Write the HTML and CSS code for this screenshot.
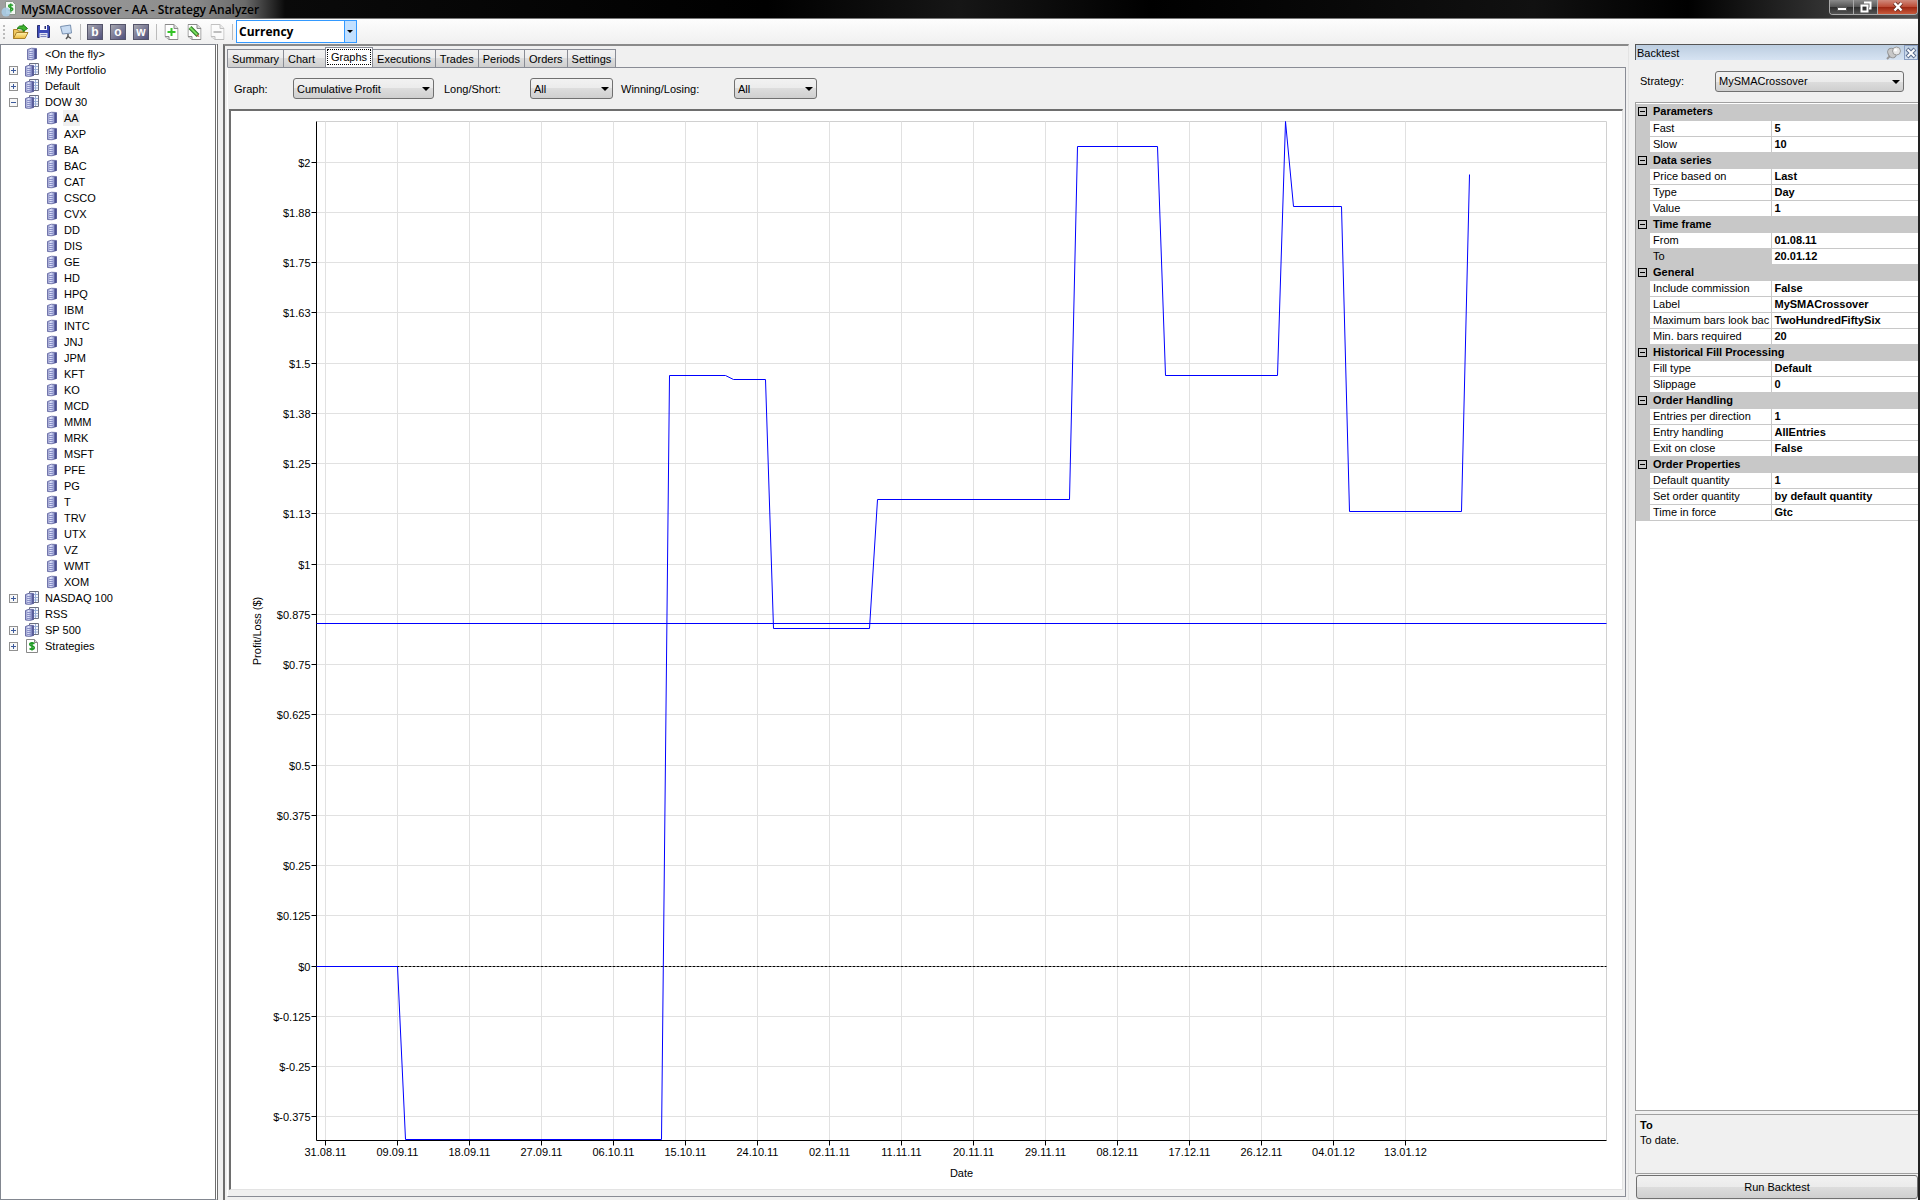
FILE: index.html
```html
<!DOCTYPE html>
<html lang="en">
<head>
  <meta charset="UTF-8">
  <meta name="viewport" content="width=device-width, initial-scale=1.0">
  <title>MySMACrossover - AA - Strategy Analyzer</title>
  <link rel="stylesheet" href="styles.css">
</head>
<body>

  <!-- shared icons -->
  <svg class="defs" width="0" height="0" aria-hidden="true">
    <defs>
      <linearGradient id="cyl" x1="0" x2="1" y1="0" y2="0">
        <stop offset="0" stop-color="#8d92c4"/>
        <stop offset="0.35" stop-color="#dfe3fa"/>
        <stop offset="0.65" stop-color="#9da4d6"/>
        <stop offset="1" stop-color="#4a4e8c"/>
      </linearGradient>
      <linearGradient id="gold" x1="0" x2="0" y1="0" y2="1">
        <stop offset="0" stop-color="#fff3b0"/>
        <stop offset="1" stop-color="#ecb93c"/>
      </linearGradient>
      <symbol id="instrument" viewBox="0 0 14 14">
        <path d="M2.500 2.500 Q6 0.500 11.500 1.500 V11.500 Q7 13.500 2.500 12.500 Z" fill="url(#cyl)" stroke="#7276ac"/>
        <path d="M4 4.500h4M4 6.500h4M4 8.500h4M4 10.500h4" stroke="#8a90c8" fill="none"/>
        <path d="M10.500 2v10" stroke="#4a4f90" stroke-width="2"/>
      </symbol>
      <symbol id="list" viewBox="0 0 14 14">
        <path d="M4.500.5h9v11h-9z" fill="#f4f6fd" stroke="#6c7080"/>
        <path d="M5 3.500h8M5 6.500h8M5 9h8M10.500 1v10" stroke="#9ab0d8"/>
        <path d="M.5 3.500 Q4 1.500 8.500 2.500 V12.500 Q5 14 .5 13 Z" fill="url(#cyl)" stroke="#6a6ea6"/>
        <path d="M2 5.500h4M2 7.500h4M2 9.500h4M2 11.500h4" stroke="#8a90c8"/>
        <path d="M8 3v10" stroke="#4a4f90"/>
      </symbol>
      <symbol id="page" viewBox="0 0 14 16">
        <path d="M.5.5h9l4 4v11h-9l-4-3z" fill="#fff" stroke="#8a8a8a"/>
        <path d="M9.500.5v4h4M.5 12.500h4v3" fill="#ddd" stroke="#8a8a8a"/>
      </symbol>
      <symbol id="pageDollar" viewBox="0 0 14 14">
        <path d="M1.500.5h8l3 3v10h-11z" fill="#fff" stroke="#888"/>
        <path d="M9.500.5v3h3" fill="#ddd" stroke="#888"/>
        <path d="M9.500 4.700Q7 3.200 5 4.500Q4 6.300 7 7Q10 7.700 9 9.500Q7 11 4.500 9.500M7 3v8.500" fill="none" stroke="#1f9a25" stroke-width="1.600"/>
      </symbol>
    </defs>
  </svg>

  <header class="titlebar">
    <svg class="app-icon" width="16" height="16" viewBox="0 0 16 16">
      <path d="M4.500.5h7l3 3v10h-10z" fill="#f4f8f4" stroke="#8a968a"/>
      <path d="M12 4.500Q10 3 8 4.200Q7 6 9.500 6.500Q12.500 7.200 11.500 9Q9.500 10.500 7.500 9M9.700 2.500v9" fill="none" stroke="#2aa02e" stroke-width="1.500"/>
      <circle cx="5" cy="11" r="4.500" fill="#a8cbe4" opacity=".9"/>
    </svg>
    <h1>MySMACrossover - AA - Strategy Analyzer</h1>
    <div class="window-buttons">
      <button type="button" aria-label="Minimize">
        <svg width="12" height="12" viewBox="0 0 12 12"><path d="M1.500 6.500h9v3h-9z" fill="#fff" stroke="#555"/></svg>
      </button>
      <button type="button" aria-label="Restore">
        <svg width="12" height="12" viewBox="0 0 12 12"><path d="M4 1.500h6.500v6H9M1.500 4.500h6v6h-6z" fill="none" stroke="#fff" stroke-width="2"/></svg>
      </button>
      <button type="button" class="close" aria-label="Close">
        <svg width="12" height="12" viewBox="0 0 12 12"><path d="M2.500 2l7 7.500M9.500 2l-7 7.500" stroke="#5e2a22" stroke-width="4"/><path d="M2.500 2l7 7.500M9.500 2l-7 7.500" stroke="#fff" stroke-width="2.500"/></svg>
      </button>
    </div>
  </header>

  <div class="toolbar">
    <span class="grip"></span>
    <button type="button" class="wide" aria-label="Open">
      <svg width="17" height="16" viewBox="0 0 17 16">
        <path d="M1.500 14.500v-9h4l1 1.500h6v7.500z" fill="#f0c860" stroke="#a8812a"/>
        <path d="M1.500 14.500l3-6h11.500l-3 6z" fill="url(#gold)" stroke="#a8812a"/>
        <path d="M5 4.500Q7 1 11 2V.5l4.500 4-4.500 3V5.500Q8 4.500 5 4.500z" fill="#3fb52f" stroke="#1e7c18"/>
      </svg>
    </button>
    <button type="button" class="wide" aria-label="Save">
      <svg width="15" height="15" viewBox="0 0 15 15">
        <path d="M1.500 1.500h11l1 1v11h-12z" fill="#3c4ab8" stroke="#2a3070"/>
        <path d="M4 1h7v5H4z" fill="#fff"/>
        <path d="M8.500 2h1.500v3H8.500z" fill="#2a3070"/>
        <path d="M3.500 9h8v5h-8z" fill="#e4e7f4"/>
        <path d="M4.500 10.500h6M4.500 12.500h6" stroke="#8088c0"/>
      </svg>
    </button>
    <button type="button" class="wide" aria-label="Workspace">
      <svg width="14" height="16" viewBox="0 0 14 16">
        <path d="M1.500 2.500l10-1.500 1 8-9 1z" fill="#c9dcf2" stroke="#7890b0"/>
        <path d="M9 10v2.500L7 15M9 12.500l3 2" fill="none" stroke="#555" stroke-width="1.500"/>
      </svg>
    </button>
    <span class="sep"></span>
    <button type="button" class="letter">b</button>
    <button type="button" class="letter">o</button>
    <button type="button" class="letter">w</button>
    <span class="sep"></span>
    <button type="button" aria-label="Add">
      <svg width="15" height="16" viewBox="0 0 14 16"><use href="#page"/><path d="M7 4v8M3 8h8" stroke="#35c428" stroke-width="2"/></svg>
    </button>
    <button type="button" aria-label="Edit">
      <svg width="15" height="16" viewBox="0 0 14 16"><use href="#page"/><path d="M2.500 3.500l8 8" stroke="#2c7a24" stroke-width="4"/><path d="M2.500 3.500l7.500 7.500" stroke="#7ade5e" stroke-width="2"/><path d="M10 10l2 3-3-1z" fill="#b04a3a"/></svg>
    </button>
    <button type="button" aria-label="Remove" class="dim">
      <svg width="15" height="16" viewBox="0 0 14 16"><use href="#page"/><path d="M3 8h8" stroke="#888" stroke-width="2"/></svg>
    </button>
    <span class="sep"></span>
    <div class="currency">
      <select aria-label="Display unit"><option>Currency</option></select>
    </div>
  </div>

  <main class="workspace">
    <nav class="tree-panel" aria-label="Instruments">
      <ul class="tree" id="tree"></ul>
    </nav>

    <section class="results">
      <div class="tabs" role="tablist">
        <button type="button" role="tab">Summary</button>
        <button type="button" role="tab" class="roomy">Chart</button>
        <button type="button" role="tab" class="active" aria-selected="true">Graphs</button>
        <button type="button" role="tab">Executions</button>
        <button type="button" role="tab">Trades</button>
        <button type="button" role="tab">Periods</button>
        <button type="button" role="tab">Orders</button>
        <button type="button" role="tab">Settings</button>
      </div>
      <div class="tab-page">
        <form class="filters">
          <label class="graph-label" for="graph">Graph:</label>
          <div class="combo graph"><select id="graph"><option>Cumulative Profit</option></select></div>
          <label class="side-label" for="side">Long/Short:</label>
          <div class="combo short"><select id="side"><option>All</option></select></div>
          <label class="outcome-label" for="outcome">Winning/Losing:</label>
          <div class="combo short"><select id="outcome"><option>All</option></select></div>
        </form>
        <div class="chart-frame" id="chartFrame">
          <svg class="chart" id="chart" role="img" aria-label="Cumulative profit"></svg>
        </div>
      </div>
    </section>

    <aside class="backtest">
      <div class="panel-title">
        <h2>Backtest</h2>
        <button type="button" class="pin" aria-label="Auto hide">
          <svg width="16" height="14" viewBox="0 0 16 14">
            <path d="M5 9l-4 4" stroke="#999" stroke-width="2"/>
            <ellipse cx="6" cy="7" rx="4" ry="5" fill="#c8c8c8" stroke="#8c8c8c" transform="rotate(-30 6 7)"/>
            <circle cx="10.500" cy="5" r="4" fill="#e8e8e8" stroke="#999"/>
            <circle cx="9.500" cy="4" r="1.500" fill="#fff"/>
          </svg>
        </button>
        <button type="button" class="shut" aria-label="Close panel">
          <svg width="12" height="12" viewBox="0 0 12 12"><path d="M2 2l8 8M10 2l-8 8" stroke="#56698c" stroke-width="4"/><path d="M2.500 2.500l7 7M9.500 2.500l-7 7" stroke="#fff" stroke-width="2"/></svg>
        </button>
      </div>
      <div class="strategy">
        <label for="strategy">Strategy:</label>
        <div class="combo"><select id="strategy"><option>MySMACrossover</option></select></div>
      </div>
      <div class="props-box">
        <table class="props" id="props"></table>
      </div>
      <div class="help">
        <strong>To</strong>
        <p>To date.</p>
      </div>
      <button type="button" class="run">Run Backtest</button>
    </aside>
  </main>

  <script>
    const dow = ['AA', 'AXP', 'BA', 'BAC', 'CAT', 'CSCO', 'CVX', 'DD', 'DIS', 'GE', 'HD', 'HPQ', 'IBM', 'INTC', 'JNJ',
      'JPM', 'KFT', 'KO', 'MCD', 'MMM', 'MRK', 'MSFT', 'PFE', 'PG', 'T', 'TRV', 'UTX', 'VZ', 'WMT', 'XOM'];

    const nodes = [
      { name: '&lt;On the fly&gt;', icon: 'instrument', box: '' },
      { name: '!My Portfolio', icon: 'list', box: '+' },
      { name: 'Default', icon: 'list', box: '+' },
      { name: 'DOW 30', icon: 'list', box: '-', children: dow },
      { name: 'NASDAQ 100', icon: 'list', box: '+' },
      { name: 'RSS', icon: 'list', box: '' },
      { name: 'SP 500', icon: 'list', box: '+' },
      { name: 'Strategies', icon: 'pageDollar', box: '+' },
    ];

    const sections = [
      ['Parameters', [['Fast', '5'], ['Slow', '10']]],
      ['Data series', [['Price based on', 'Last'], ['Type', 'Day'], ['Value', '1']]],
      ['Time frame', [['From', '01.08.11'], ['To', '20.01.12']]],
      ['General', [['Include commission', 'False'], ['Label', 'MySMACrossover'],
        ['Maximum bars look bac', 'TwoHundredFiftySix'], ['Min. bars required', '20']]],
      ['Historical Fill Processing', [['Fill type', 'Default'], ['Slippage', '0']]],
      ['Order Handling', [['Entries per direction', '1'], ['Entry handling', 'AllEntries'], ['Exit on close', 'False']]],
      ['Order Properties', [['Default quantity', '1'], ['Set order quantity', 'by default quantity'], ['Time in force', 'Gtc']]],
    ];

    function icon(name) {
      return `<svg width="14" height="14"><use href="#${name}"/></svg>`;
    }

    // Plus or minus box in front of a node
    function expander(sign) {
      if (!sign) return '<span class="blank"></span>';
      const bar = sign === '+' ? 'M2 4.500h5M4.500 2v5' : 'M2 4.500h5';
      return `<button type="button" class="expander" aria-label="Toggle"><svg width="9" height="9"><path d="${bar}" stroke="currentColor"/></svg></button>`;
    }

    function renderTree() {
      document.getElementById('tree').innerHTML = nodes.map(node => `
        <li><div class="node">${expander(node.box)}${icon(node.icon)}<span>${node.name}</span></div>
        ${node.children ? '<ul>' + node.children.map((c, i) =>
          `<li><div class="node">${icon('instrument')}<span class="${i === 0 ? 'selected' : ''}">${c}</span></div></li>`).join('') + '</ul>' : ''}
        </li>`).join('');
    }

    function renderProps() {
      document.getElementById('props').innerHTML = '<colgroup><col class="gutter"><col class="name"><col></colgroup>' +
        sections.map(([title, rows]) => `
        <tbody>
          <tr class="head"><td>${expander('-')}</td><th colspan="2">${title}</th></tr>
          ${rows.map(([name, value]) => `<tr class="${name === 'To' ? 'current' : ''}"><td></td><th>${name}</th><td>${value}</td></tr>`).join('')}
        </tbody>`).join('');
    }

    // Draws axes, grid and the cumulative profit line to fill the frame
    function renderChart() {
      const frame = document.getElementById('chartFrame');
      const chart = document.getElementById('chart');
      const width = frame.clientWidth, height = frame.clientHeight;
      const left = 85.5, right = width - 15.5, top = 10.5, bottom = height - 48.5;
      const maxProfit = 2.101, range = 2.535, days = 161.25;
      const perDollar = (bottom - top) / range;
      const labels = ['$2', '$1.88', '$1.75', '$1.63', '$1.5', '$1.38', '$1.25', '$1.13', '$1', '$0.875', '$0.75', '$0.625',
        '$0.5', '$0.375', '$0.25', '$0.125', '$0', '$-0.125', '$-0.25', '$-0.375'];
      const dates = ['31.08.11', '09.09.11', '18.09.11', '27.09.11', '06.10.11', '15.10.11', '24.10.11', '02.11.11',
        '11.11.11', '20.11.11', '29.11.11', '08.12.11', '17.12.11', '26.12.11', '04.01.12', '13.01.12'];
      // [days since 31.08.11, profit]
      const profit = [[-1, 0], [9, 0], [10, -0.432], [42, -0.432], [43, 1.47], [50, 1.47], [51, 1.46], [55, 1.46],
        [56, 0.84], [68, 0.84], [69, 1.16], [93, 1.16], [94, 2.04], [104, 2.04], [105, 1.47], [119, 1.47], [120, 2.1],
        [121, 1.89], [127, 1.89], [128, 1.13], [142, 1.13], [143, 1.97]];
      const average = 0.853;
      const x = day => Math.floor(left + (day + 1.125) * (right - left) / days) + 0.5;
      const y = value => Math.floor(top + (maxProfit - value) * perDollar) + 0.5;

      let svg = `<path class="edge" d="M${left} ${top}H${right}V${bottom}"/>`;
      labels.forEach((text, i) => {
        const ly = y(2 - i * 0.125);
        if (text !== '$0') svg += `<path class="grid" d="M${left} ${ly}H${right}"/>`;
        svg += `<path class="axis" d="M${left - 5} ${ly}H${left}"/><text class="value" x="${left - 6}" y="${ly + 4}">${text}</text>`;
      });
      dates.forEach((text, i) => {
        const lx = x(i * 9);
        svg += `<path class="grid" d="M${lx} ${top}V${bottom}"/><path class="axis" d="M${lx} ${bottom}v5"/>
          <text class="date" x="${lx}" y="${bottom + 15}">${text}</text>`;
      });
      svg += `<path class="zero" d="M${left} ${y(0)}H${right}"/>
        <path class="axis" d="M${left} ${top}V${bottom}H${right}"/>
        <path class="line" d="M${left} ${y(average)}H${right}"/>
        <polyline class="line" points="${profit.map(([d, v], i) => (i ? x(d) : left) + ',' + y(v)).join(' ')}"/>
        <text class="date" x="${(left + right) / 2}" y="${bottom + 36}">Date</text>
        <text class="date" transform="translate(30 ${(top + bottom) / 2}) rotate(-90)">Profit/Loss ($)</text>`;
      chart.setAttribute('viewBox', `0 0 ${width} ${height}`);
      chart.innerHTML = svg;
    }

    renderTree();
    renderProps();
    renderChart();
    window.addEventListener('resize', renderChart);
  </script>
</body>
</html>
```
FILE: styles.css
```css
* {
  box-sizing: border-box;
}

body {
  font-family: "Liberation Sans", Arial, sans-serif;
  font-size: 11px;
  line-height: 16px;
  color: #000;
  margin: 0;
  height: 100vh;
  display: flex;
  flex-direction: column;
  background-color: #f0f0f0;
  border-right: 2px solid #222;
  overflow: hidden;
}

h1, h2, p, ul {
  margin: 0;
  padding: 0;
  font-size: inherit;
  font-weight: normal;
}

ul {
  list-style-type: none;
}

button, select {
  font: inherit;
  color: inherit;
  padding: 0;
  margin: 0;
}

svg {
  display: block;
  flex: none;
}

.defs {
  position: absolute;
}

/* title bar */
.titlebar {
  display: flex;
  align-items: center;
  height: 19px;
  flex: none;
  background: linear-gradient(90deg, #a0a0a0 0, #8c8c8c 190px, #6a6a6a 245px, #0a0a0a 285px, #000 40%, #161616 50%, #000 60%, #111 80%, #000 88%, #2a2a2a 94%, #555 100%);
  border-bottom: 1px solid #777;
}

.app-icon {
  margin: 0 4px 0 1px;
}

.titlebar h1 {
  padding-top: 2px;
  font-family: "Open Sans", sans-serif;
  font-size: 12px;
  font-weight: 600;
  flex: 1;
}

.window-buttons {
  display: flex;
  align-self: flex-start;
  height: 15px;
  border: 1px solid #aaa;
  border-top: none;
  border-radius: 0 0 4px 4px;
  overflow: hidden;
}

.window-buttons button {
  display: flex;
  align-items: center;
  justify-content: center;
  width: 24px;
  border: none;
  border-right: 1px solid #aaa;
  background: linear-gradient(#8a8a8a, #555 50%, #2c2c2c 50%, #555);
}

.window-buttons .close {
  width: 39px;
  border-right: none;
  background: linear-gradient(#d08a7c, #bc4a34 50%, #9c2410 50%, #c85a3c);
}

/* toolbar */
.toolbar {
  display: flex;
  align-items: center;
  height: 25px;
  flex: none;
  background: linear-gradient(#fdfdfd, #f0f0f0);
}

.toolbar button {
  display: flex;
  align-items: center;
  justify-content: center;
  width: 16px;
  height: 16px;
  margin-right: 7px;
  border: none;
  background: none;
}

.toolbar .wide {
  width: 18px;
  margin-right: 5px;
}

.toolbar .letter {
  border: 1px solid #55556a;
  background: linear-gradient(135deg, #a8a8b0, #50507c);
  color: #fff;
  font-weight: bold;
  font-size: 12px;
  line-height: 12px;
}

.toolbar .dim {
  opacity: 0.5;
}

.grip {
  width: 2px;
  height: 14px;
  margin: 0 6px 0 3px;
  background: repeating-linear-gradient(#bbb 0 2px, transparent 2px 4px);
}

.sep {
  width: 1px;
  height: 16px;
  margin-right: 6px;
  background-color: #bbb;
}

.toolbar .sep + div {
  margin-left: -3px;
}

.currency {
  position: relative;
  width: 121px;
  height: 23px;
}

.currency select {
  appearance: none;
  width: 100%;
  height: 100%;
  padding-left: 2px;
  border: 1px solid #3399ff;
  border-radius: 0;
  background: linear-gradient(90deg, #fff 107px, #3399ff 107px, #3399ff 108px, #c2e0ff 108px);
  font-family: "Open Sans", sans-serif;
  font-size: 12px;
  font-weight: bold;
}

.currency::after,
.combo::after {
  content: "";
  position: absolute;
  top: 9px;
  right: 4px;
  border: 4px solid transparent;
  border-top-color: #000;
  border-bottom: none;
  pointer-events: none;
}

.currency::after {
  top: 10px;
  border-width: 3px;
  border-bottom: none;
}

/* main area */
.workspace {
  display: flex;
  flex: 1;
  min-height: 0;
}

.tree-panel {
  width: 218px;
  flex: none;
  background-color: #fff;
  border: 1px solid #828790;
  border-right: 3px double #6e6e6e;
  padding-top: 1px;
  overflow: hidden;
}

.node {
  display: flex;
  align-items: center;
  height: 16px;
  padding-left: 8px;
}

.node svg {
  margin-right: 5px;
}

.node span {
  padding: 0 1px;
}

.tree ul .node {
  padding-left: 44px;
}

.tree ul .node svg {
  margin-right: 4px;
}

.selected {
  background-color: #f0f0f0;
}

.expander,
.blank {
  width: 9px;
  height: 9px;
  margin-right: 7px;
  flex: none;
}

.expander {
  display: block;
  border: 1px solid #919191;
  background-color: #f8f8f8;
  color: #3c5a9c;
}

.node .expander svg,
.props .expander svg {
  margin: -1px;
}

/* results */
.results {
  display: flex;
  flex-direction: column;
  flex: 1;
  min-width: 0;
  margin-left: 5px;
  margin-right: 6px;
  padding: 3px 0 0 2px;
  border-left: 2px solid #6e6e6e;
  border-top: 2px solid #8a8a8a;
  border-right: 1px solid #e3e3e3;
}

.tabs {
  display: flex;
  align-items: flex-end;
  height: 18px;
}

.tabs button {
  height: 18px;
  padding: 0 4px;
  margin-left: -1px;
  border: 1px solid #898c95;
  border-bottom: none;
  border-radius: 0;
  background: linear-gradient(#f2f2f2, #ebebeb 50%, #dddddd 50%, #cfcfcf);
}

.tabs button:first-child {
  margin-left: 0;
}

.tabs .roomy {
  padding-right: 10px;
}

.tabs .active {
  position: relative;
  height: 20px;
  padding: 0 5px 2px;
  background: #fff;
  outline: 1px dotted #000;
  outline-offset: -3px;
}

.tab-page {
  display: flex;
  flex-direction: column;
  flex: 1;
  min-height: 0;
  margin: 0 2px 3px 0;
  padding: 0 2px 6px 1px;
  border: 1px solid #898c95;
  border-left-color: #fff;
}

.filters {
  display: flex;
  align-items: center;
  height: 41px;
  flex: none;
  padding-left: 5px;
}

.graph-label {
  width: 59px;
}

.side-label {
  width: 86px;
  margin-left: 10px;
}

.outcome-label {
  width: 113px;
  margin-left: 8px;
}

.combo {
  position: relative;
  height: 21px;
}

.combo select {
  appearance: none;
  width: 100%;
  height: 100%;
  padding-left: 3px;
  border: 1px solid #707070;
  border-radius: 3px;
  background: linear-gradient(#f2f2f2, #ebebeb 50%, #dddddd 50%, #cfcfcf);
}

.graph {
  width: 141px;
}

.short {
  width: 83px;
}

.chart-frame {
  flex: 1;
  min-height: 0;
  background-color: #fff;
  border: 2px solid #6e6e6e;
  border-right: 1px solid #e3e3e3;
  border-bottom: 1px solid #e3e3e3;
}

.chart {
  width: 100%;
  height: 100%;
}

.chart path,
.chart polyline {
  fill: none;
}

.chart .grid {
  stroke: #e1e1e1;
}

.chart .edge {
  stroke: #d0d0d0;
}

.chart .axis {
  stroke: #000;
}

.chart .zero {
  stroke: #000;
  stroke-dasharray: 3 1;
}

.chart .line {
  stroke: #0000ff;
}

.chart .value {
  text-anchor: end;
}

.chart .date {
  text-anchor: middle;
}

/* backtest panel */
.backtest {
  display: flex;
  flex-direction: column;
  width: 283px;
  flex: none;
  padding-bottom: 1px;
}

.panel-title {
  display: flex;
  align-items: center;
  height: 16px;
  border-top: 1px solid #555;
  border-left: 1px solid #555;
  background: linear-gradient(#bccde0, #d6e3f2);
}

.panel-title h2 {
  flex: 1;
  padding-left: 1px;
  line-height: 14px;
}

.panel-title button {
  display: flex;
  align-items: center;
  justify-content: center;
  height: 15px;
  width: 16px;
  border: none;
  background: none;
}

.panel-title .shut {
  width: 14px;
  margin-left: 2px;
  border: 1px solid #8ba0c4;
}

.strategy {
  display: flex;
  align-items: center;
  height: 42px;
  padding: 0 14px 0 5px;
}

.strategy label {
  width: 75px;
}

.strategy .combo {
  flex: 1;
}

.props-box {
  flex: 1;
  min-height: 0;
  padding-top: 1px;
  background-color: #fff;
  border: 1px solid #a0a0a0;
  border-right: none;
  overflow: hidden;
}

.props {
  width: 100%;
  border-collapse: collapse;
  table-layout: fixed;
}

.gutter {
  width: 14px;
}

.name {
  width: 121px;
}

.props td,
.props th {
  height: 16px;
  padding: 0 0 0 3px;
  line-height: 15px;
  text-align: left;
  font-weight: normal;
  white-space: nowrap;
  overflow: hidden;
  border-bottom: 1px solid #c8c8c8;
}

.props th + td {
  border-left: 1px solid #c8c8c8;
  font-weight: bold;
}

.props td:first-child,
.props .head th,
.props .current th {
  background-color: #c8c8c8;
}

.props td:first-child {
  padding: 0 0 0 2px;
}

.props .head th {
  font-weight: bold;
}

.props .expander {
  color: #000;
  border-color: #000;
  background-color: #c8c8c8;
  margin: 0;
}

.help {
  height: 60px;
  margin: 3px 0 1px;
  padding: 3px 4px;
  border: 1px solid #a0a0a0;
  border-right: none;
  line-height: 15px;
}

.run {
  height: 24px;
  margin-left: 1px;
  border: 1px solid #707070;
  border-radius: 3px;
  background: linear-gradient(#f2f2f2, #ebebeb 50%, #dddddd 50%, #cfcfcf);
}
```
